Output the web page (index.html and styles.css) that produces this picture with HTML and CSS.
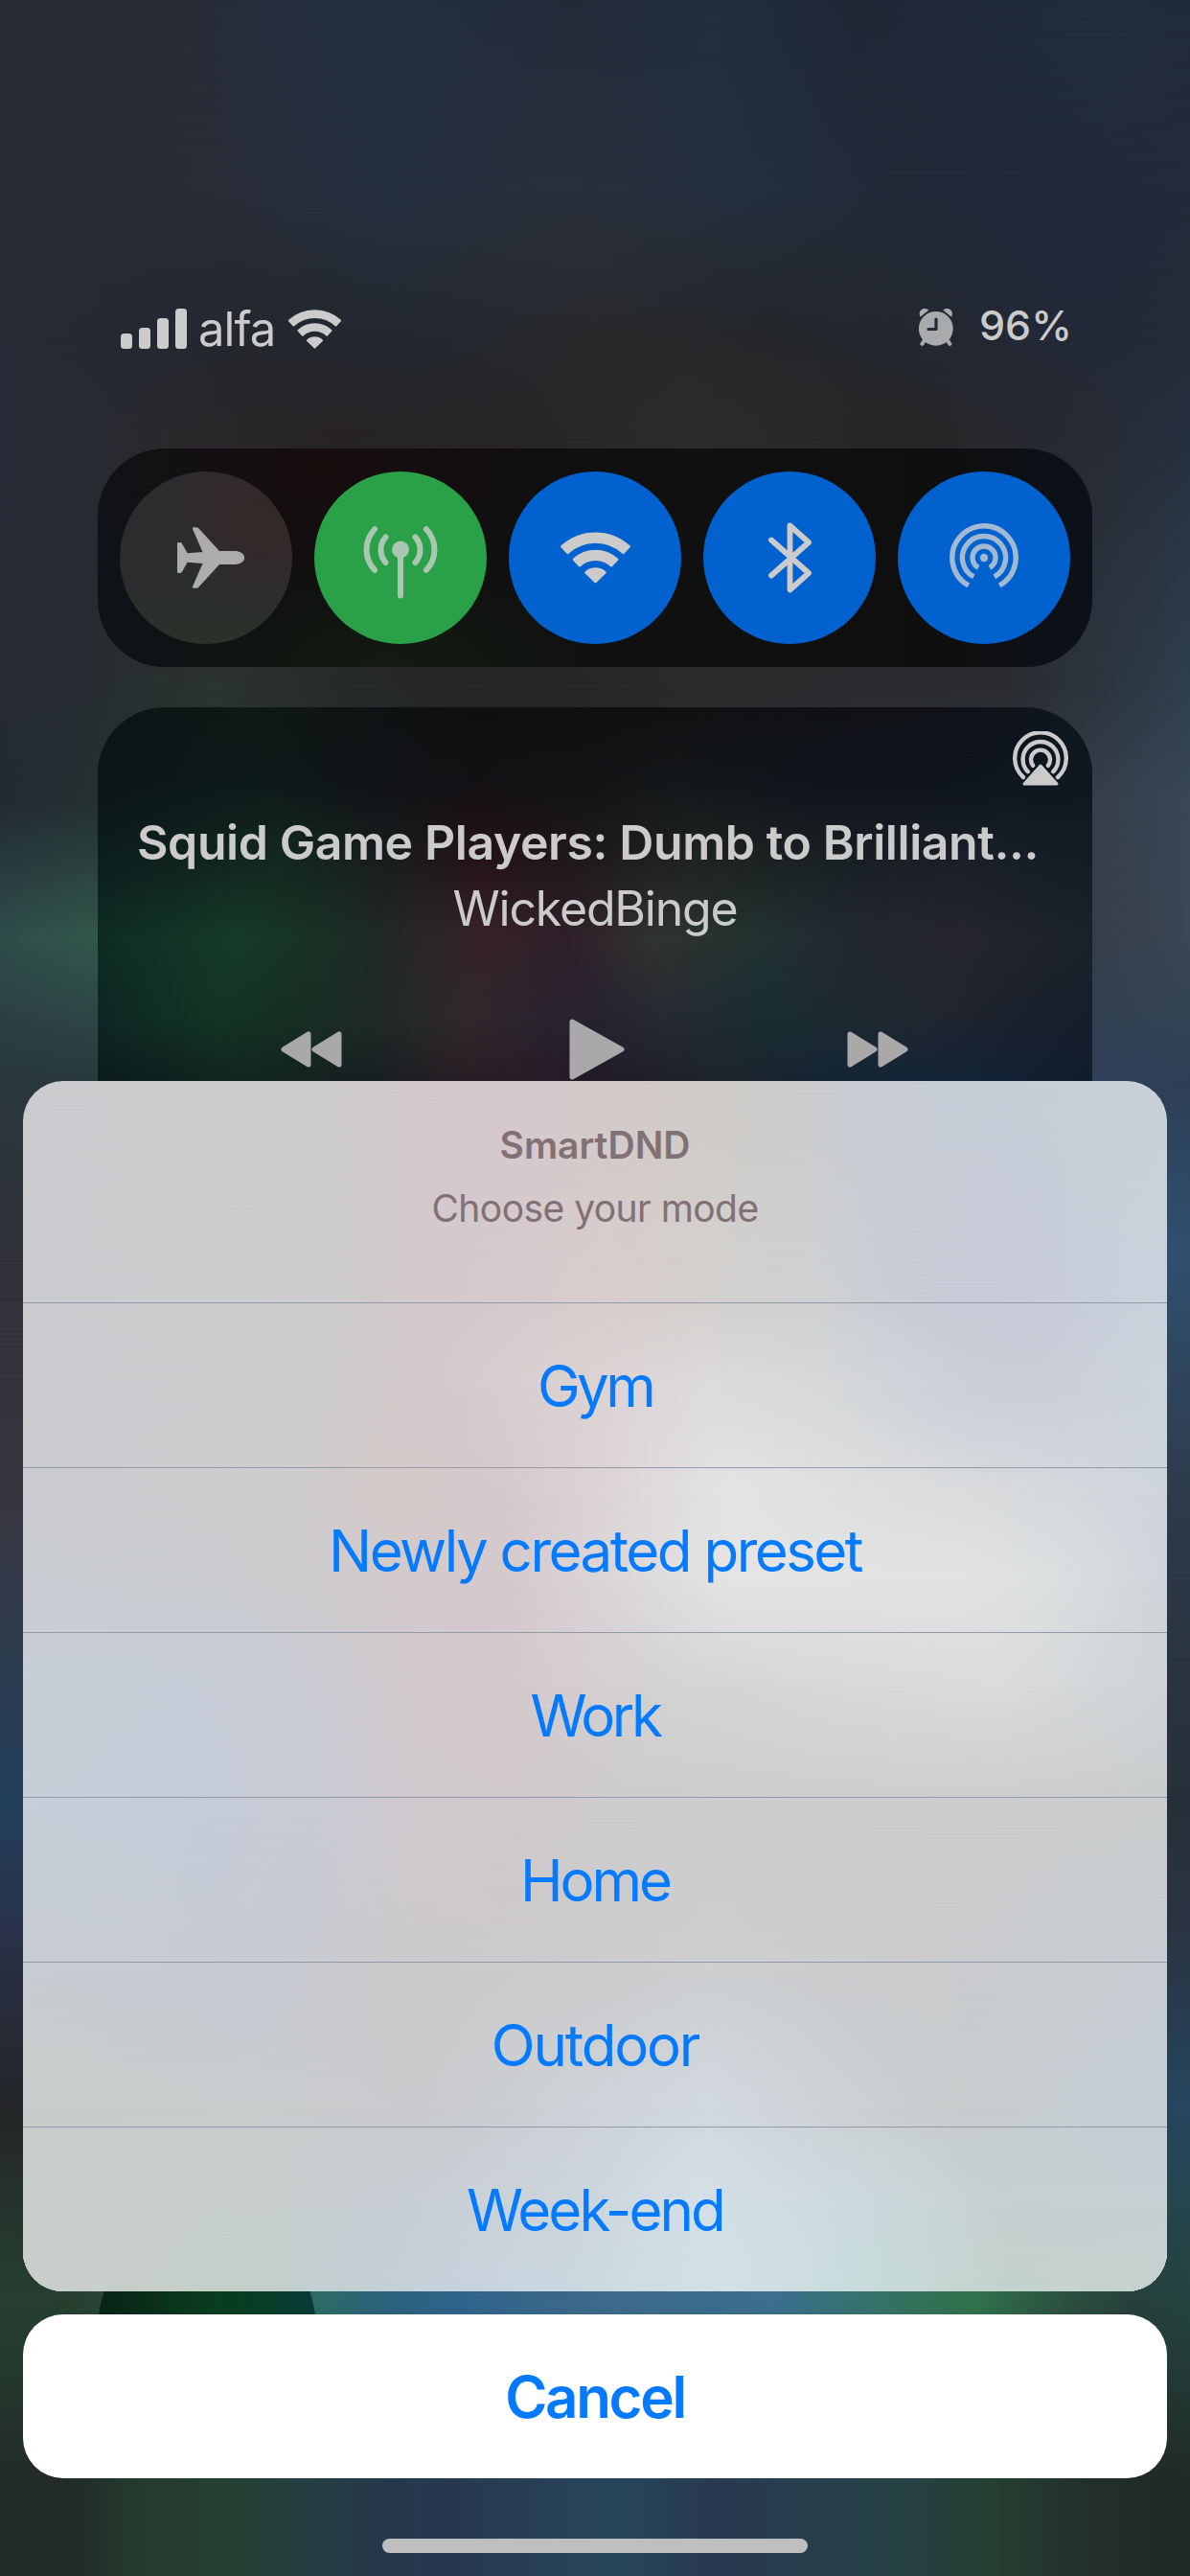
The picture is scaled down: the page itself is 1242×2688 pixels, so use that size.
FILE: index.html
```html
<!DOCTYPE html>
<html lang="en">
<head>
<meta charset="utf-8">
<title>SmartDND</title>
<link rel="stylesheet" href="styles.css">
</head>
<body>
<svg class="defs" width="0" height="0" aria-hidden="true">
  <symbol id="wifi" viewBox="0 0 55 41">
    <g fill="currentColor" stroke="currentColor" stroke-width="2" stroke-linejoin="round">
      <path d="M.9 11.6A39.5 39.5 0 0 1 54.1 11.6L49.5 16.5A32.5 32.5 0 0 0 5.5 16.5Z"/>
      <path d="M10.4 21.9A25.3 25.3 0 0 1 44.6 21.9L40.1 26.7A18.7 18.7 0 0 0 14.9 26.7Z"/>
      <path d="M19.9 32.2A11.3 11.3 0 0 1 35.1 32.2L27.5 39.6Z"/>
    </g>
  </symbol>
</svg>

<main class="screen">
  <div class="mesh wall">
    <i class="w0"></i><i class="w1"></i><i class="w2"></i><i class="w3"></i><i class="w4"></i><i class="w5"></i><i class="w6"></i><i class="w7"></i><i class="w8"></i><i class="w9"></i><i class="w10"></i><i class="w11"></i><i class="w12"></i><i class="w13"></i><i class="w14"></i>
  </div>

  <header class="status">
    <svg class="signal" viewBox="0 0 69 42" fill="currentColor"><rect y="26" width="12" height="16" rx="3.5"/><rect x="19" y="20" width="12" height="22" rx="3.5"/><rect x="38" y="10" width="12" height="32" rx="3.5"/><rect x="57" width="12" height="42" rx="3.5"/></svg>
    <span class="carrier">alfa</span>
    <svg class="status-wifi"><use href="#wifi"/></svg>
    <svg class="alarm" viewBox="0 0 36 39">
      <g fill="currentColor">
        <path d="M1.2 8.2C-.4 4 1.8 0 6 0c2 0 3.500.6 4.200 1.700L2.200 8.300Z"/>
        <path d="M34.400 8.200C36 4 33.800 0 29.600 0c-2 0-3.500.6-4.200 1.700L33.400 8.300Z"/>
        <circle cx="17.800" cy="20.800" r="17.900"/>
      </g>
      <path d="M6 33L3.400 36.800M29.800 33l2.500 3.800" fill="none" stroke="currentColor" stroke-width="4" stroke-linecap="round"/>
      <path class="hands" d="M18 11.200V21.500H10" fill="none" stroke-width="3.200" stroke-linecap="round" stroke-linejoin="round"/>
    </svg>
    <span class="battery">96%</span>
  </header>

  <section class="toggles">
    <div class="toggle plane"><svg width="70" height="64" viewBox="0 0 70 64" fill="currentColor"><path d="M0 17Q0 16 1 16H3Q4.200 16 4.800 17L10.700 27.300L26.500 26L16 2Q15.500.3 17 .3H20Q21.500.3 22.500 1.500L44 25H60C66 25 70.300 28.500 70.300 32S66 39 60 39H44L22.500 62.500Q21.500 63.700 20 63.700H17Q15.500 63.700 16 62L26.500 38L10.700 36.700L4.800 47Q4.200 48 3 48H1Q0 48 0 47Z"/></svg></div>
    <div class="toggle cell"><svg width="78" height="76" viewBox="0 0 78 76" fill="none" stroke="currentColor" stroke-width="6" stroke-linecap="round"><path d="M39 24.500V72.500M23.500 11.500A20 20 0 0 0 23.500 38M12 3.200A31 31 0 0 0 12 45.800M54.500 11.500A20 20 0 0 1 54.500 38M66 3.200A31 31 0 0 1 66 45.800"/><circle cx="39" cy="24.500" r="9" fill="currentColor" stroke="none"/></svg></div>
    <div class="toggle blue"><svg width="73" height="54"><use href="#wifi"/></svg></div>
    <div class="toggle blue"><svg width="45" height="74" viewBox="0 0 45 74" fill="none" stroke="currentColor" stroke-width="5.800" stroke-linecap="round" stroke-linejoin="round"><path d="M3 18.500L42 53L22.500 70.500V3.500L42 21L3 55.500"/></svg></div>
    <div class="toggle blue airdrop"><svg width="72" height="72" viewBox="0 0 72 72" fill="none" stroke="currentColor" stroke-width="5.400"><path d="M19.800 65A33.200 33.200 0 1 1 52.200 65M25.200 55.900A22.600 22.600 0 1 1 46.800 55.900M30.100 46.400A12 12 0 1 1 41.900 46.400"/><circle cx="36" cy="36" r="4.200" fill="currentColor" stroke="none"/></svg></div>
  </section>

  <section class="player">
    <div class="mesh"><i class="p0"></i><i class="p1"></i><i class="p2"></i><i class="p3"></i><i class="p4"></i><i class="p5"></i></div>
    <svg class="airplay" viewBox="0 0 58 57" fill="none" stroke="currentColor" stroke-width="4.400" stroke-linecap="round"><path d="M11 48A26.800 26.800 0 1 1 47 48M15.800 42.200A18.400 18.400 0 1 1 42.200 42.200M21.100 35.800A10 10 0 1 1 36.900 35.800"/><path d="M29 36L46 55H12Z" fill="currentColor" stroke-width="3" stroke-linejoin="round"/></svg>
    <div class="track"><span>Squid Game Players: Dumb to Brilliant...</span></div>
    <div class="artist"><span>WickedBinge</span></div>
    <div class="controls">
      <svg width="64" height="38" viewBox="0 0 64 38"><path d="M3 19L29 3V35ZM35 19L61 3V35Z"/></svg>
      <svg class="play" width="58" height="64" viewBox="0 0 58 64"><path d="M3 3L55 32L3 61Z"/></svg>
      <svg width="64" height="38" viewBox="0 0 64 38"><path d="M3 3L29 19L3 35ZM35 3L61 19L35 35Z"/></svg>
    </div>
  </section>

  <div class="tile"></div>

  <div class="overlay">
    <section class="sheet">
      <div class="mesh"><i class="s0"></i><i class="s1"></i><i class="s2"></i><i class="s3"></i><i class="s4"></i><i class="s5"></i><i class="s6"></i><i class="s7"></i><i class="s8"></i><i class="s9"></i><i class="s10"></i></div>
      <div class="heading">
        <b class="title">SmartDND</b>
        <span class="message">Choose your mode</span>
      </div>
      <div class="option"><span class="gym">Gym</span></div>
      <div class="option"><span class="preset">Newly created preset</span></div>
      <div class="option"><span class="work">Work</span></div>
      <div class="option"><span class="home">Home</span></div>
      <div class="option"><span class="outdoor">Outdoor</span></div>
      <div class="option"><span class="weekend">Week-end</span></div>
    </section>
    <div class="cancel"><span>Cancel</span></div>
    <div class="indicator"></div>
  </div>
</main>
</body>
</html>
```
FILE: styles.css
```css
* { box-sizing: border-box; }
body { margin: 0; background: #242a34; font-family: Inter, "Liberation Sans", sans-serif; color: #cbcbcb; }
.defs { position: absolute; }
svg { display: block; flex: none; }
span, b { white-space: nowrap; }

.screen { position: relative; width: 1242px; height: 2688px; overflow: hidden; display: flex; flex-direction: column; isolation: isolate; }

/* Colour mesh: each row fades in over the previous one */
.mesh { position: absolute; inset: 0; z-index: -1; overflow: hidden; }
.mesh i { position: absolute; left: 0; right: 0; bottom: 0; -webkit-mask-image: linear-gradient(transparent, #000 var(--f)); mask-image: linear-gradient(transparent, #000 var(--f)); }

.w0 { top: 0; --f: 0px; background: linear-gradient(90deg, #262b36, #272c37 16%, #232f40 28%, #222e3f 36%, #222b38 48%, #212e3d 60%, #1f2835 72%, #202b3a 84%, #202c3e 92%, #202b3c); }
.w1 { top: 0; --f: 200px; background: linear-gradient(90deg, #262b35, #282c36 16%, #25303f 32%, #29303c 48%, #232f3e 62%, #212a37 76%, #202a3a 88%, #222b39); }
.w2 { top: 200px; --f: 150px; background: linear-gradient(90deg, #252b36, #24272d 20%, #232830 34%, #29292b 50%, #25272a 64%, #232831 78%, #222937 90%, #242b38); }
.w3 { top: 350px; --f: 100px; background: linear-gradient(90deg, #262c38, #2a292c 14%, #272325 28%, #262627 44%, #2d2c2b 58%, #272626 75%, #272a32 90%, #25303e); }
.w4 { top: 450px; --f: 268px; background: linear-gradient(90deg, #262a35, #262d30 8%, #2b3431 18%, #262a28 30%, #252526 42%, #2b2b2d 60%, #2a2c30 85%, #2c3843 94%, #303f4c); }
.w5 { top: 718px; --f: 120px; background: linear-gradient(90deg, #222b32, #26352f 15%, #28292b 50%, #30383f 85%, #394756); }
.w6 { top: 838px; --f: 140px; background: linear-gradient(90deg, #2f4d49, #35604f 15%, #28292b 50%, #30383f 85%, #3b4754); }
.w7 { top: 978px; --f: 152px; background: linear-gradient(90deg, #29373c, #293a40 15%, #28292b 50%, #30405c 85%, #2d3f55); }
.w8 { top: 1130px; --f: 180px; background: linear-gradient(90deg, #303139, #303139 50%, #31506f 85%, #31506f); }
.w9 { top: 1310px; --f: 270px; background: linear-gradient(90deg, #373742, #373742 50%, #2e3a49 85%, #2e3a49); }
.w10 { top: 1580px; --f: 300px; background: linear-gradient(90deg, #23405b, #23405b 50%, #27303a 85%, #27303a); }
.w11 { top: 1880px; --f: 130px; background: linear-gradient(90deg, #29324a, #29324a 50%, #2a3442 85%, #2a3442); }
.w12 { top: 2010px; --f: 190px; background: linear-gradient(90deg, #242628, #242628 50%, #26465e 85%, #26465e); }
.w13 { top: 2200px; --f: 200px; background: linear-gradient(90deg, #264031, #26402f 6%, #2b4e45 12%, #2c6c68 27%, #2d6280 33%, #31658d 39%, #3d6b8c 50%, #3c7090 65%, #34745f 76%, #30734b 82%, #2c5340 89%, #27403c 95%, #25443f); }
.w14 { top: 2400px; --f: 190px; background: linear-gradient(90deg, #222b28, #222b28 6%, #243b2e 12%, #254032 19%, #253f3f 25%, #25394a 31%, #26384f 38%, #284056 46%, #26455a 52%, #28394f 60%, #263f4c 70%, #254041 76%, #254032 83%, #23322c 90%, #202a27 97%); }

.status { display: flex; align-items: center; height: 100px; margin: 290px 0 0; padding: 0 126px; }
.signal { width: 69px; height: 42px; margin-top: 6px; }
.carrier { width: 77px; margin: 7px 0 0 12px; font-size: 49px; line-height: 60px; letter-spacing: -1px; }
.status-wifi { width: 55px; height: 41px; margin: 7px 0 0 17px; }
.alarm { width: 36px; height: 39px; margin: 3px 0 0 auto; color: #a9aaac; }
.hands { stroke: #242a33; }
.battery { width: 93px; margin: -2px 1px 0 27px; font-size: 43px; font-weight: 500; line-height: 60px; }

.toggles { display: flex; gap: 23px; width: 1038px; height: 228px; margin: 78px 102px 0; padding: 24px 23px; border-radius: 70px;
  background: radial-gradient(ellipse 260px 120px at 300px 228px, #131b12, transparent), radial-gradient(ellipse 260px 160px at 240px 20px, #170e0e, transparent), linear-gradient(90deg, #101318, #0f0f10 20%, #101010 60%, #0f0f10 86%, #0c1119); }
.toggle { display: grid; place-items: center; width: 180px; height: 180px; border-radius: 50%; }
.blue { background: #0061cf; }
.cell { background: #2aa148; color: #abc7b2; }
.cell svg { margin-top: 9px; }
.plane { padding-left: 10px; color: #adabab; background: radial-gradient(circle 100px at 150px 50px, #352828, transparent), linear-gradient(#2d2b2f, #2b2d2c 60%, #2b312b); }
.airdrop { color: #a3b9d2; }

.player { position: relative; isolation: isolate; width: 1038px; height: 504px; margin: 42px 102px 0; padding-top: 25px; border-radius: 70px; overflow: hidden; }
.p0 { top: 0; --f: 0px; background: linear-gradient(90deg, #0d1416, #0f1916 16%, #0f1314 28%, #0f0f10 38%, #101113 60%, #101217 85%, #0e1820); }
.p1 { top: 0; --f: 80px; background: linear-gradient(90deg, #0c1618, #0d1b1a 16%, #111417 28%, #141115 38%, #131416 50%, #15181a 58%, #10141c 76%, #0e1821); }
.p2 { top: 80px; --f: 75px; background: linear-gradient(90deg, #0c1d1d, #13281f 18%, #181e1e 28%, #241318 38%, #1e181c 48%, #1f2321 60%, #182023 75%, #191f27 88%, #111d26); }
.p3 { top: 155px; --f: 85px; background: linear-gradient(90deg, #0f2c24, #163b28 14%, #183425 20%, #202926 28%, #382329 39%, #2f202a 47%, #31332f 56%, #223330 66%, #222830 76%, #26252d 86%, #1a232c); }
.p4 { top: 240px; --f: 85px; background: linear-gradient(90deg, #0e2724, #133524 12%, #153022 18%, #202a28 28%, #30282c 37%, #27222f 49%, #262a32 57%, #1a2d32 67%, #202630 84%, #161e2a); }
.p5 { top: 325px; --f: 65px; background: linear-gradient(90deg, #0c1b1c, #122620 14%, #161f20 27%, #2a1e25 38%, #221b27 50%, #1d252b 62%, #142537 76%, #142338 88%, #101c2d); }
.airplay { width: 58px; height: 57px; margin-left: 955px; }
.track { height: 60px; margin-top: 29px; padding-left: 41px; font-size: 50px; line-height: 60px; font-weight: 600; letter-spacing: -.42px; }
.artist { height: 60px; margin-top: 9px; text-align: center; font-size: 50px; line-height: 60px; letter-spacing: -1.2px; }
.controls { display: flex; justify-content: space-between; align-items: center; height: 64px; margin-top: 85px; padding: 0 192px 0 191px; color: #a9a9aa; }
.controls path { fill: currentColor; stroke: currentColor; stroke-width: 5; stroke-linejoin: round; }
.play { margin-left: 5px; }

.tile { width: 228px; height: 228px; margin: 1074px 0 0 102px; border-radius: 50%; background: linear-gradient(90deg, #082414, #0a3b20 50%, #063d22 70%, #063a38); }

/* Action sheet over the control centre */
.overlay { position: absolute; left: 24px; right: 24px; bottom: 0; height: 1560px; display: flex; flex-direction: column; align-items: stretch; }
.sheet { position: relative; isolation: isolate; height: 1263px; border-radius: 42px; overflow: hidden; }
.heading { height: 231px; padding-top: 43px; display: flex; flex-direction: column; align-items: center; gap: 18px; color: #827174; font-size: 39px; line-height: 48px; }
.title { font-weight: 600; }
.message { letter-spacing: -.55px; }
.option { display: grid; place-items: center; height: 172px; border-top: 1px solid #949aa3; color: #057aff; font-size: 60px; line-height: 72px; letter-spacing: -2.5px; }
.gym { letter-spacing: -3.6px; }
.work { letter-spacing: -3.4px; }
.home { letter-spacing: -3px; }
.outdoor { letter-spacing: -2.2px; }
.weekend { letter-spacing: -2.9px; }
.cancel { display: grid; place-items: center; height: 171px; margin-top: 24px; border-radius: 42px; background: #fff; color: #057aff; font-size: 60px; font-weight: 600; line-height: 72px; letter-spacing: -2.3px; }
.indicator { width: 444px; height: 15px; margin: 63px auto 0; border-radius: 8px; background: #bfbfbf; }

.s0 { top: 0; --f: 0px; background: linear-gradient(90deg, #cacccf, #cccccd 20%, #cfcbcb 30%, #d4c8cc 40%, #d2cac9 52%, #cfccc8 61%, #cacdd2 72%, #c7ced8 80%, #c8d1da); }
.s1 { top: 0; --f: 231px; background: linear-gradient(90deg, #cbcccf, #cccdce 22%, #d0cbcb 31%, #d5c9cc 37%, #d7cdcd 50%, #d3d0ce 60%, #ced0d2 70%, #c7cbd7 80%, #c7cbd8 86%, #c9d2dc); }
.s2 { top: 231px; --f: 90px; background: linear-gradient(90deg, #cbccd0, #cccdce 22%, #d1cbcb 31%, #d5cacc 38%, #dcd3d3 50%, #dddbdb 60%, #d6d8d9 70%, #cacfd8 83%, #c9ced8 88%, #ccd3dd); }
.s3 { top: 321px; --f: 110px; background: linear-gradient(90deg, #cbccd1, #cdcdce 20%, #d2cac9 32%, #d5c9cc 42%, #ddd7d8 53%, #e4e4e6 62%, #dedfdf 72%, #d8dadc 86%, #ced5dc); }
.s4 { top: 431px; --f: 90px; background: linear-gradient(90deg, #cacdd2, #cbcdd0 18%, #d1cacb 32%, #d4c9cc 42%, #dbd7d8 52%, #e4e4e5 62%, #e3e3e3 74%, #e2e3e3 82%, #dcdfe0 90%, #ced4d9); }
.s5 { top: 521px; --f: 110px; background: linear-gradient(90deg, #c7cfd6, #c6cdd8 14%, #c8ccd5 22%, #d0cace 32%, #d4c9cd 42%, #d4d1d2 54%, #d8d8d8 70%, #dadbdc 85%, #cfd3d6); }
.s6 { top: 631px; --f: 130px; background: linear-gradient(90deg, #c6cfd9, #c4ccd9 16%, #c8cbd4 25%, #cfcacf 33%, #cfc9cb 42%, #cdcccc 54%, #cccccd 80%, #cacccd); }
.s7 { top: 761px; --f: 170px; background: linear-gradient(90deg, #c7ccd1, #c6cad2 20%, #cbc9ca 34%, #cccacc 45%, #cdcfd1 60%, #cacbcd 80%, #c7cdd2); }
.s8 { top: 931px; --f: 140px; background: linear-gradient(90deg, #c8ccca, #c9cccd 20%, #c9cacd 35%, #cdd3d8 50%, #d1d9df 60%, #cdd2d5 70%, #c7cccd 82%, #c4cfd5); }
.s9 { top: 1071px; --f: 100px; background: linear-gradient(90deg, #c8cecb, #c7cfcc 18%, #c7ced2 30%, #cbd4db 48%, #d3dfe7 59%, #ccdadd 72%, #c6d1d1 85%, #c5d1d3); }
.s10 { top: 1171px; --f: 80px; background: linear-gradient(90deg, #cacdcb, #c4cfc9 18%, #c4cfd3 28%, #c6d1dc 38%, #ccd9e1 50%, #d3e0e8 61%, #c7dad8 75%, #c4d2ce 86%, #c6d2d0); }
```
